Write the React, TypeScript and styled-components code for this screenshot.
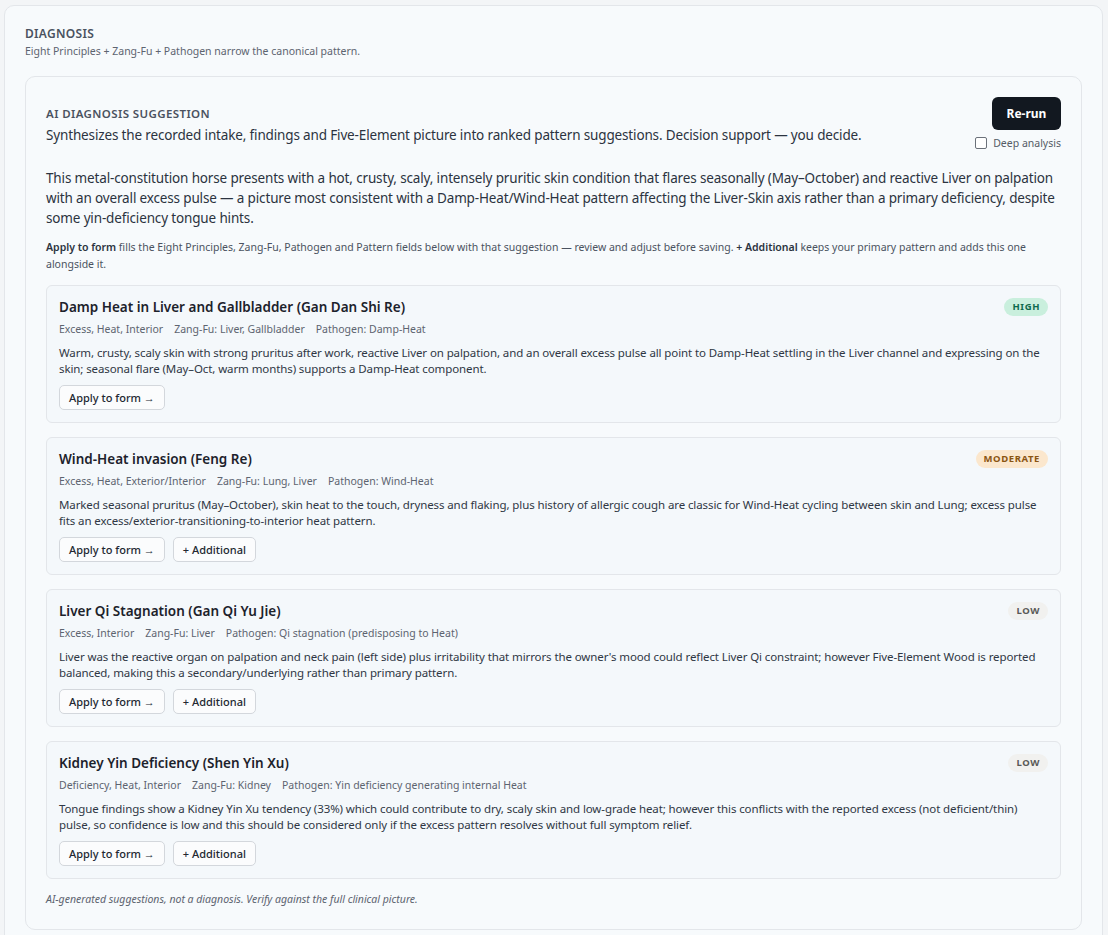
import * as React from 'react'
import styled, { createGlobalStyle } from 'styled-components'

const GlobalStyle = createGlobalStyle`
  html, body {
    margin: 0;
    padding: 0;
    background: #f3f5f7;
  }
  body {
    font-family: 'Noto Sans', 'Open Sans', Arial, sans-serif;
    color: #2b3340;
  }
`

const Panel = styled.section`
  margin: 5px 5px 0 4px;
  padding: 20px 20px 40px 20px;
  background: #f7fafc;
  border: 1px solid #e3e6ea;
  border-radius: 10px;
`
const PanelTitle = styled.h2`
  margin: 0;
  font-size: 12px;
  line-height: 16px;
  font-weight: 600;
  letter-spacing: 0.3px;
  color: #4a5260;
`
const PanelHint = styled.p`
  margin: 2px 0 0;
  font-size: 10.5px;
  line-height: 15px;
  color: #5d6470;
`
const SuggestionCard = styled.div`
  margin-top: 17px;
  padding: 20px 20px 22px;
  background: #f7fafc;
  border: 1px solid #e3e6ea;
  border-radius: 10px;
`
const HeaderRow = styled.div`
  display: flex;
  justify-content: space-between;
  align-items: flex-start;
`
const HeaderText = styled.div`
  padding-top: 9px;
`
const Eyebrow = styled.div`
  font-size: 11.5px;
  line-height: 16px;
  font-weight: 600;
  letter-spacing: 0.4px;
  color: #4a5260;
`
const Lead = styled.div`
  margin-top: 3px;
  font-size: 13.5px;
  line-height: 20px;
  letter-spacing: -0.15px;
  color: #2b3340;
`
const Actions = styled.div`
  display: flex;
  flex-direction: column;
  align-items: flex-end;
  gap: 6px;
`
const RunButton = styled.button`
  width: 69px;
  height: 33px;
  border: none;
  border-radius: 6px;
  background: #121820;
  color: #ffffff;
  font-family: inherit;
  font-size: 12px;
  font-weight: 700;
  cursor: pointer;
`
const CheckLabel = styled.label`
  display: flex;
  align-items: center;
  gap: 6px;
  font-size: 10.5px;
  line-height: 14px;
  color: #555c66;
`
const CheckBox = styled.span`
  width: 10px;
  height: 10px;
  border: 1px solid #6b717a;
  border-radius: 2px;
  background: #ffffff;
`
const Summary = styled.p`
  margin: 18px 0 0;
  font-size: 13.5px;
  line-height: 20px;
  letter-spacing: -0.15px;
  color: #2b3340;
`
const Note = styled.p`
  margin: 11px 0 0;
  font-size: 10.5px;
  line-height: 17px;
  color: #4a5260;

  b {
    font-weight: 600;
    color: #2b3340;
  }
`
const CardList = styled.div`
  margin-top: 12px;
  display: flex;
  flex-direction: column;
  gap: 14px;
`
const PatternCard = styled.div`
  padding: 11px 12px 12px 12px;
  background: #f4f8fb;
  border: 1px solid #e3e6ea;
  border-radius: 6px;
`
const PatternHead = styled.div`
  display: flex;
  justify-content: space-between;
  align-items: center;
`
const PatternName = styled.div`
  font-size: 13.5px;
  line-height: 20px;
  font-weight: 600;
  color: #1c222b;
`
const Badge = styled.span<{ $level: 'high' | 'moderate' | 'low' }>`
  padding: 0 8px;
  height: 18px;
  line-height: 18px;
  border-radius: 9px;
  font-size: 9.5px;
  font-weight: 700;
  letter-spacing: 0.6px;
  background: ${({ $level }) =>
    $level === 'high' ? '#c9efdd' : $level === 'moderate' ? '#fbe7cd' : '#f1f1ef'};
  color: ${({ $level }) =>
    $level === 'high' ? '#0f6a4e' : $level === 'moderate' ? '#8a5512' : '#5a5a58'};
`
const Meta = styled.div`
  margin-top: 5px;
  display: flex;
  gap: 11px;
  font-size: 10.5px;
  line-height: 15px;
  color: #5d6470;
`
const Rationale = styled.p`
  margin: 8px 0 0;
  font-size: 11.5px;
  line-height: 16px;
  letter-spacing: -0.1px;
  color: #2f3744;
`
const ButtonRow = styled.div`
  margin-top: 8px;
  display: flex;
  gap: 8px;
`
const GhostButton = styled.button`
  height: 25px;
  padding: 0 9px;
  border: 1px solid #d3d7dc;
  border-radius: 5px;
  background: #fbfcfd;
  color: #222831;
  font-family: inherit;
  font-size: 11px;
  font-weight: 500;
  cursor: pointer;
`
const Disclaimer = styled.p`
  margin: 13px 0 0;
  font-size: 10.5px;
  line-height: 15px;
  font-style: italic;
  color: #5d6470;
`

type Level = 'high' | 'moderate' | 'low'

interface IPattern {
  name: string
  level: Level
  principles: string
  zangFu: string
  pathogen: string
  rationale: string
  additional: boolean
}

const patterns: IPattern[] = [
  {
    name: 'Damp Heat in Liver and Gallbladder (Gan Dan Shi Re)',
    level: 'high',
    principles: 'Excess, Heat, Interior',
    zangFu: 'Liver, Gallbladder',
    pathogen: 'Damp-Heat',
    rationale:
      'Warm, crusty, scaly skin with strong pruritus after work, reactive Liver on palpation, and an overall excess pulse all point to Damp-Heat settling in the Liver channel and expressing on the skin; seasonal flare (May–Oct, warm months) supports a Damp-Heat component.',
    additional: false
  },
  {
    name: 'Wind-Heat invasion (Feng Re)',
    level: 'moderate',
    principles: 'Excess, Heat, Exterior/Interior',
    zangFu: 'Lung, Liver',
    pathogen: 'Wind-Heat',
    rationale:
      'Marked seasonal pruritus (May–October), skin heat to the touch, dryness and flaking, plus history of allergic cough are classic for Wind-Heat cycling between skin and Lung; excess pulse fits an excess/exterior-transitioning-to-interior heat pattern.',
    additional: true
  },
  {
    name: 'Liver Qi Stagnation (Gan Qi Yu Jie)',
    level: 'low',
    principles: 'Excess, Interior',
    zangFu: 'Liver',
    pathogen: 'Qi stagnation (predisposing to Heat)',
    rationale:
      "Liver was the reactive organ on palpation and neck pain (left side) plus irritability that mirrors the owner's mood could reflect Liver Qi constraint; however Five-Element Wood is reported balanced, making this a secondary/underlying rather than primary pattern.",
    additional: true
  },
  {
    name: 'Kidney Yin Deficiency (Shen Yin Xu)',
    level: 'low',
    principles: 'Deficiency, Heat, Interior',
    zangFu: 'Kidney',
    pathogen: 'Yin deficiency generating internal Heat',
    rationale:
      'Tongue findings show a Kidney Yin Xu tendency (33%) which could contribute to dry, scaly skin and low-grade heat; however this conflicts with the reported excess (not deficient/thin) pulse, so confidence is low and this should be considered only if the excess pattern resolves without full symptom relief.',
    additional: true
  }
]

const levelLabel: Record<Level, string> = {
  high: 'HIGH',
  moderate: 'MODERATE',
  low: 'LOW'
}

const PatternItem = ({ item }: { item: IPattern }) => (
  <PatternCard>
    <PatternHead>
      <PatternName>{item.name}</PatternName>
      <Badge $level={item.level}>{levelLabel[item.level]}</Badge>
    </PatternHead>
    <Meta>
      <span>{item.principles}</span>
      <span>Zang-Fu: {item.zangFu}</span>
      <span>Pathogen: {item.pathogen}</span>
    </Meta>
    <Rationale>{item.rationale}</Rationale>
    <ButtonRow>
      <GhostButton>Apply to form →</GhostButton>
      {item.additional && <GhostButton>+ Additional</GhostButton>}
    </ButtonRow>
  </PatternCard>
)

export default function App() {
  return (
    <>
      <GlobalStyle />
      <Panel>
        <PanelTitle>DIAGNOSIS</PanelTitle>
        <PanelHint>Eight Principles + Zang-Fu + Pathogen narrow the canonical pattern.</PanelHint>
        <SuggestionCard>
          <HeaderRow>
            <HeaderText>
              <Eyebrow>AI DIAGNOSIS SUGGESTION</Eyebrow>
              <Lead>
                Synthesizes the recorded intake, findings and Five-Element picture into ranked
                pattern suggestions. Decision support — you decide.
              </Lead>
            </HeaderText>
            <Actions>
              <RunButton>Re-run</RunButton>
              <CheckLabel>
                <CheckBox />
                Deep analysis
              </CheckLabel>
            </Actions>
          </HeaderRow>
          <Summary>
            This metal-constitution horse presents with a hot, crusty, scaly, intensely pruritic
            skin condition that flares seasonally (May–October) and reactive Liver on palpation
            with an overall excess pulse — a picture most consistent with a Damp-Heat/Wind-Heat
            pattern affecting the Liver-Skin axis rather than a primary deficiency, despite some
            yin-deficiency tongue hints.
          </Summary>
          <Note>
            <b>Apply to form</b> fills the Eight Principles, Zang-Fu, Pathogen and Pattern fields
            below with that suggestion — review and adjust before saving. <b>+ Additional</b> keeps
            your primary pattern and adds this one alongside it.
          </Note>
          <CardList>
            {patterns.map(p => (
              <PatternItem key={p.name} item={p} />
            ))}
          </CardList>
          <Disclaimer>
            AI-generated suggestions, not a diagnosis. Verify against the full clinical picture.
          </Disclaimer>
        </SuggestionCard>
      </Panel>
    </>
  )
}
